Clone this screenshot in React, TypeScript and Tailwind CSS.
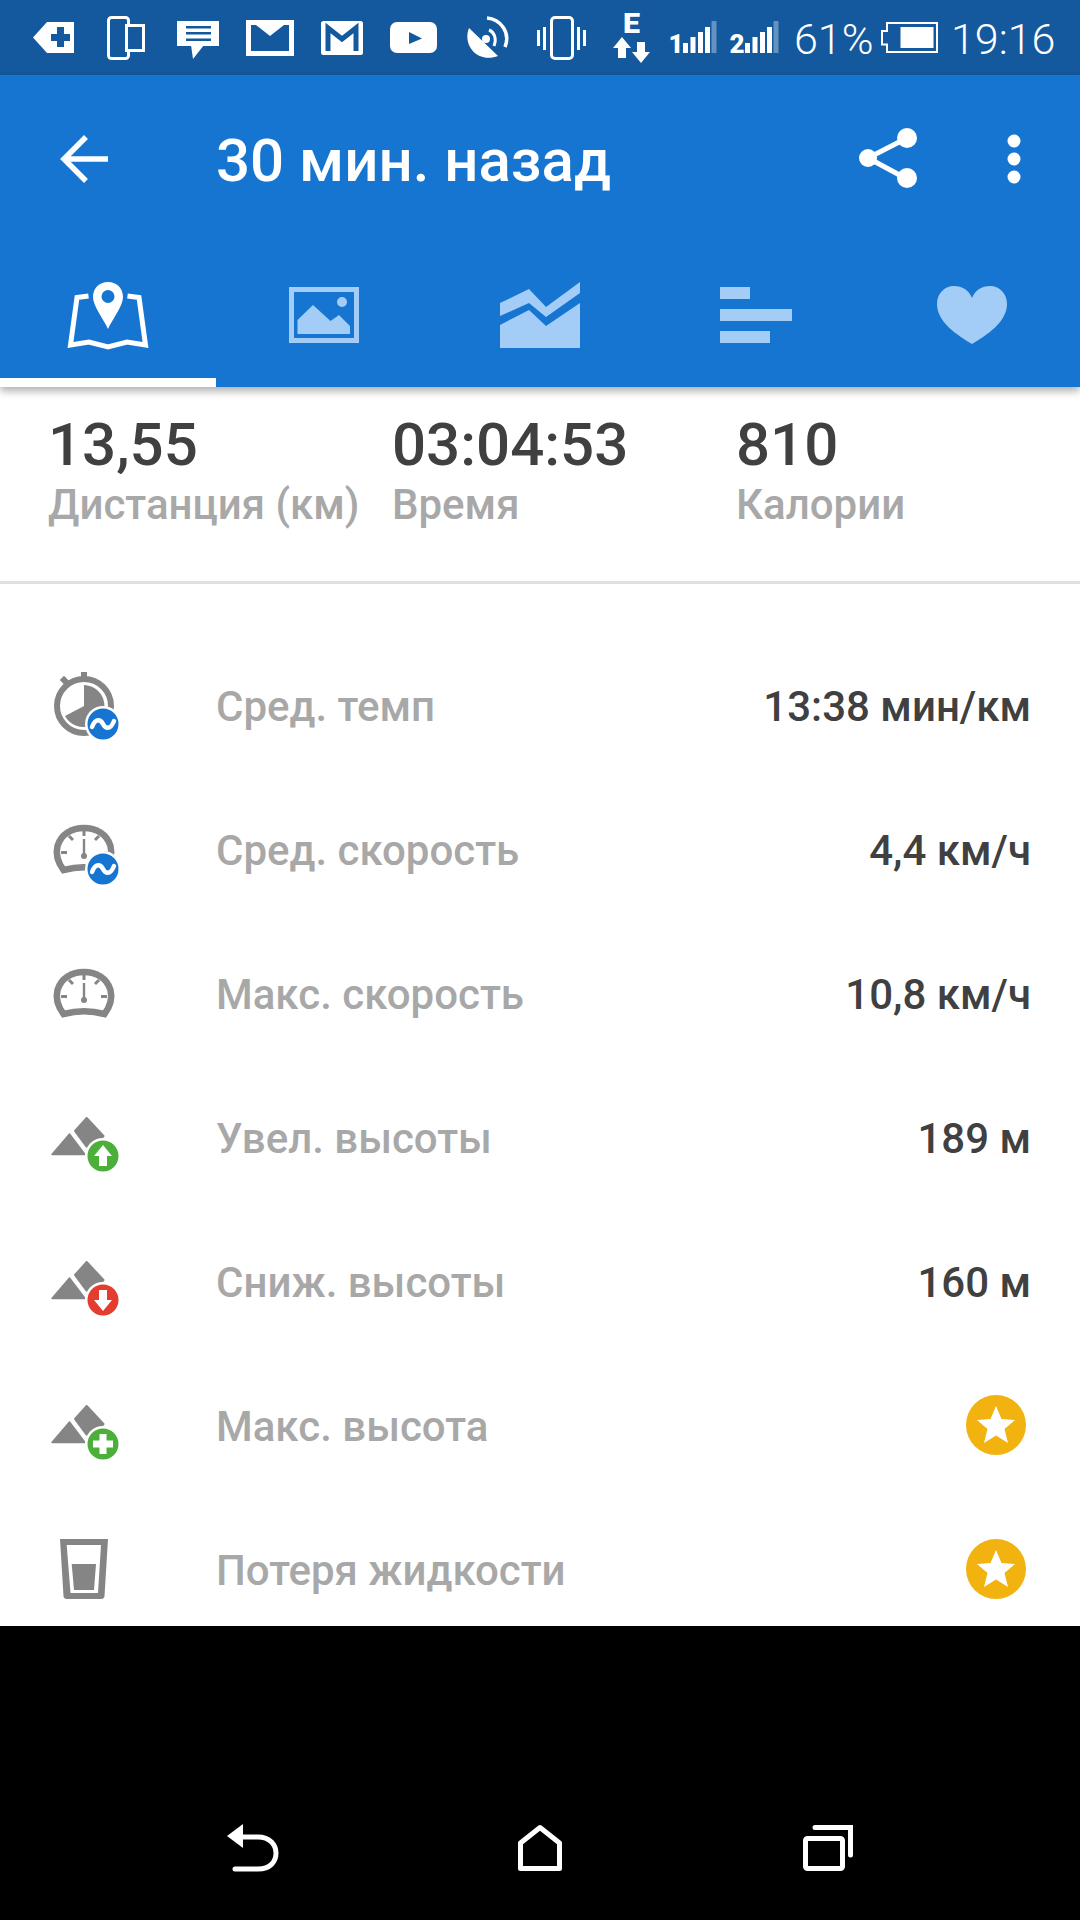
import React from "react";

const GRAY = "#858585";

function S({ x, w, ml, children }: { x: number; w: number; ml: number; children: React.ReactNode }) {
  return (
    <svg width={w} height={75} viewBox={`${x} 0 ${w} 75`} className="shrink-0 block overflow-visible" style={{ marginLeft: ml }}>
      {children}
    </svg>
  );
}

const BAR = "#14589e";

function Bars({ x0 }: { x0: number }) {
  const xs = [0, 7.5, 15, 22];
  const tops = [43, 37, 32, 27];
  return (
    <>
      {xs.map((d, i) => (
        <rect key={i} x={x0 + d} y={tops[i]} width={5} height={53 - tops[i]} fill="#fff" />
      ))}
      <rect x={x0 + 28.5} y={21} width={5} height={32} fill="#fff" opacity={0.35} />
    </>
  );
}

function StatusBar() {
  return (
    <div className="h-[75px] bg-[#14589e] flex items-center text-white font-light text-[43px] leading-none">
      <S x={33} w={41} ml={33}>
        <polygon points="33,37.5 47,22 74,22 74,53 47,53" fill="#fff" />
        <rect x={51} y={34} width={19} height={7} fill={BAR} />
        <rect x={57} y={27} width={7} height={20} fill={BAR} />
      </S>
      <S x={107} w={38} ml={33}>
        <rect x={108.5} y={17.5} width={20} height={41} rx={3} fill={BAR} stroke="#fff" strokeWidth={3} />
        <rect x={126.5} y={25.5} width={17} height={25} fill={BAR} stroke="#fff" strokeWidth={3} />
      </S>
      <S x={177} w={42} ml={32}>
        <rect x={177} y={21} width={42} height={25} fill="#fff" />
        <polygon points="191,45 204,45 193,59" fill="#fff" />
        <rect x={186} y={26} width={25} height={2.5} fill={BAR} />
        <rect x={186} y={32} width={25} height={2.5} fill={BAR} />
        <rect x={186} y={38.5} width={25} height={2.5} fill={BAR} />
      </S>
      <S x={246} w={48} ml={27}>
        <rect x={246} y={20} width={48} height={36} fill="#fff" />
        <rect x={251} y={25} width={38} height={26} fill={BAR} />
        <polygon points="256,25 284,25 270,36" fill="#fff" />
      </S>
      <S x={321} w={42} ml={27}>
        <rect x={321} y={21} width={42} height={34} rx={2.5} fill="#fff" />
        <polyline points="328,51 328,28 342,39 356,28 356,51" fill="none" stroke={BAR} strokeWidth={5} />
      </S>
      <S x={390} w={47} ml={27}>
        <rect x={390} y={22} width={47} height={31} rx={7} fill="#fff" />
        <polygon points="409,32 422,38.5 409,44" fill={BAR} />
      </S>
      <S x={468} w={42} ml={31}>
        <path d="M469 28 L498 56 C488 60 477 57 472 50 C467 44 466 35 469 28 Z" fill="#fff" />
        <circle cx={486} cy={39} r={4} fill="#fff" />
        <path d="M489 30 C494 32 497 38 494 46" fill="none" stroke="#fff" strokeWidth={3} />
        <path d="M487 18 C500 19 511 32 505 47" fill="none" stroke="#fff" strokeWidth={3.5} />
      </S>
      <S x={536} w={50} ml={26}>
        <rect x={551.5} y={17.5} width={21} height={41} rx={3.5} fill="none" stroke="#fff" strokeWidth={3} />
        <rect x={537} y={30} width={3} height={16} fill="#fff" />
        <rect x={543} y={27} width={3} height={23} fill="#fff" />
        <rect x={577} y={27} width={3} height={23} fill="#fff" />
        <rect x={583} y={30} width={3} height={16} fill="#fff" />
      </S>
      <S x={613} w={37} ml={27}>
        <text x={623} y={33} textLength={17} lengthAdjust="spacingAndGlyphs" fontFamily="Roboto, sans-serif" fontWeight={900} fontSize={28} fill="#fff">E</text>
        <polygon points="622,37 631,48 626,48 626,58 618,58 618,48 613,48" fill="#fff" />
        <polygon points="641,63 632,52 637,52 637,42 645,42 645,52 650,52" fill="#fff" />
      </S>
      <S x={671} w={46} ml={21}>
        <text x={676} y={53} textAnchor="middle" fontFamily="Roboto, sans-serif" fontWeight={900} fontSize={26} fill="#fff">1</text>
        <Bars x0={683} />
      </S>
      <S x={731} w={49} ml={14}>
        <text x={737} y={53} textAnchor="middle" fontFamily="Roboto, sans-serif" fontWeight={900} fontSize={26} fill="#fff">2</text>
        <Bars x0={745} />
      </S>
      <span className="ml-[14px] w-[77px] pt-[3px] shrink-0 font-['Roboto',sans-serif] whitespace-nowrap">61%</span>
      <S x={881} w={57} ml={10}>
        <path d="M887 23 H937 V52 H887 V44.5 H882 V31 H887 Z" fill="none" stroke="#fff" strokeWidth={2} />
        <rect x={900.5} y={27} width={33} height={21} fill="#fff" />
      </S>
      <span className="ml-[13px] pt-[3px] font-['Roboto',sans-serif]">19:16</span>
    </div>
  );
}

function TabIcon({ children }: { children: React.ReactNode }) {
  return (
    <svg width={90} height={70} viewBox="0 0 90 70" className="block">
      {children}
    </svg>
  );
}

function Tabs() {
  const c = "#a3cdf7";
  const icons = [
    <TabIcon key="m">
      <path fillRule="evenodd" d="M45 0 C36 0 30 6.500 30 15 C30 24 40 36 45 47 C50 36 60 24 60 15 C60 6.500 54 0 45 0 Z M45 8 A6.500 6.500 0 1 1 45 21 A6.500 6.500 0 0 1 45 8 Z" fill="#fff" />
      <path d="M25.500 14 L14 15.500 L7.500 63 L26 60 L45 65 L64 60 L82.500 63 L76 15.500 L64.500 14" fill="none" stroke="#fff" strokeWidth={5} />
    </TabIcon>,
    <TabIcon key="i">
      <rect x={12.500} y={7.500} width={65} height={51} fill="none" stroke={c} strokeWidth={5} />
      <circle cx={63} cy={20} r={5} fill={c} />
      <polygon points="18.500,52 18.500,38 34,23 51.500,39 60,33 71,44 71,52" fill={c} />
    </TabIcon>,
    <TabIcon key="c">
      <polygon points="5,21 34,7 51,25 85,0 85,11 51,35 34,21 5,34" fill={c} />
      <polygon points="5,43 34,28 51,44 85,21 85,66 5,66" fill={c} />
    </TabIcon>,
    <TabIcon key="b">
      <rect x={9} y={5} width={30} height={12} fill={c} />
      <rect x={9} y={27} width={72} height={12} fill={c} />
      <rect x={9} y={49} width={50} height={12} fill={c} />
    </TabIcon>,
    <TabIcon key="h">
      <path d="M45 62 C30 53 10 40 10 22 C10 11 18 4 27 4 C35 4 42 8 45 16 C48 8 55 4 63 4 C72 4 80 11 80 22 C80 40 60 53 45 62 Z" fill={c} />
    </TabIcon>,
  ];
  return (
    <div className="flex h-[105px]">
      {icons.map((ic, i) => (
        <div key={i} className="relative w-[216px] h-[105px] flex items-start justify-center">
          {ic}
          {i === 0 && <div className="absolute left-0 right-0 bottom-0 h-[9px] bg-white" />}
        </div>
      ))}
    </div>
  );
}

function AppBar() {
  return (
    <div className="relative z-10 bg-[#1675d1] h-[312px] shadow-[0_4px_8px_rgba(0,0,0,0.32)]">
      <div className="h-[207px] flex items-start">
        <svg width={48} height={50} viewBox="0 0 48 50" className="ml-[60px] mt-[59px] shrink-0">
          <path d="M48 25 H4 M26 3 L4 25 L26 47" fill="none" stroke="#fff" strokeWidth={5.500} />
        </svg>
        <div className="ml-[108px] mt-[51px] text-[60px] leading-[70px] font-medium text-white whitespace-nowrap">
          30 мин. назад
        </div>
        <svg width={60} height={62} viewBox="0 0 60 62" className="ml-auto mt-[52px] shrink-0">
          <path d="M48 11 L9 31 L48 52" fill="none" stroke="#fff" strokeWidth={5} />
          <circle cx={48} cy={11} r={10} fill="#fff" />
          <circle cx={9} cy={31} r={9} fill="#fff" />
          <circle cx={48} cy={51} r={10} fill="#fff" />
        </svg>
        <svg width={14} height={50} viewBox="0 0 14 50" className="ml-[88px] mr-[59px] mt-[59px] shrink-0">
          <circle cx={7} cy={7} r={6.500} fill="#fff" />
          <circle cx={7} cy={25} r={6.500} fill="#fff" />
          <circle cx={7} cy={43} r={6.500} fill="#fff" />
        </svg>
      </div>
      <Tabs />
    </div>
  );
}

function Stat({ v, l }: { v: string; l: string }) {
  return (
    <div className="w-[344px]">
      <div className="text-[60px] leading-[60px] font-medium text-[#404040]">{v}</div>
      <div className="text-[42px] leading-[60px] font-medium text-[#a8a8a8] whitespace-nowrap">{l}</div>
    </div>
  );
}

function Wave({ cx, cy }: { cx: number; cy: number }) {
  return (
    <>
      <circle cx={cx} cy={cy} r={18} fill="#fff" />
      <circle cx={cx} cy={cy} r={15.500} fill="#1675d1" />
      <path d={`M${cx - 11} ${cy + 3} C${cx - 7} ${cy - 7} ${cx - 2} ${cy - 4} ${cx} ${cy} C${cx + 2} ${cy + 4} ${cx + 7} ${cy + 7} ${cx + 11} ${cy - 3}`} fill="none" stroke="#fff" strokeWidth={4.500} strokeLinecap="round" />
    </>
  );
}

function Speedo() {
  return (
    <>
      <path d="M19.500 60 C12 50 12 42 13.500 36 C17 24 28 18 40 18 C52 18 63 24 66.500 36 C68 42 68 50 60.500 60 C47 56.500 33 56.500 19.500 60 Z" fill="none" stroke={GRAY} strokeWidth={6.500} />
      <rect x={38.500} y={18} width={3} height={8} fill={GRAY} />
      <rect x={17} y={41} width={6} height={3} fill={GRAY} />
      <rect x={57} y={41} width={6} height={3} fill={GRAY} />
      <path d="M25 26 L29 30 M55 26 L51 30" stroke={GRAY} strokeWidth={3} />
      <rect x={38.800} y={29} width={2.400} height={16} fill={GRAY} />
      <circle cx={40} cy={46} r={3} fill={GRAY} />
    </>
  );
}

function Mountains() {
  return (
    <>
      <polygon points="8,56.500 25.500,36 41,56.500" fill={GRAY} stroke={GRAY} strokeWidth={1.500} strokeLinejoin="round" />
      <polygon points="31,33 42.700,20 59.500,38 47,52 42,48" fill={GRAY} stroke={GRAY} strokeWidth={2} strokeLinejoin="round" />
    </>
  );
}

function Badge({ fill, children }: { fill: string; children: React.ReactNode }) {
  return (
    <>
      <circle cx={59} cy={58} r={18} fill="#fff" />
      <circle cx={59} cy={58} r={15.500} fill={fill} />
      {children}
    </>
  );
}

const rowIcons = [
  <>
    <circle cx={40} cy={40} r={27} fill="none" stroke={GRAY} strokeWidth={6} />
    <rect x={37} y={6} width={6} height={8} fill={GRAY} />
    <rect x={17} y={11} width={6} height={7} fill={GRAY} transform="rotate(-45 20 14)" />
    <path d="M40 19 A21 21 0 1 1 21 50 L40 40 Z" fill={GRAY} />
    <Wave cx={59} cy={58} />
  </>,
  <>
    <Speedo />
    <Wave cx={59} cy={59} />
  </>,
  <Speedo />,
  <>
    <Mountains />
    <Badge fill="#4caf3a">
      <polygon points="59,47 68,58 63,58 63,68 55,68 55,58 50,58" fill="#fff" />
    </Badge>
  </>,
  <>
    <Mountains />
    <Badge fill="#e53c30">
      <polygon points="59,69 68,58 63,58 63,48 55,48 55,58 50,58" fill="#fff" />
    </Badge>
  </>,
  <>
    <Mountains />
    <Badge fill="#4caf3a">
      <rect x={55.500} y={48} width={7} height={20} fill="#fff" />
      <rect x={49} y={54.500} width={20} height={7} fill="#fff" />
    </Badge>
  </>,
  <>
    <path fillRule="evenodd" d="M16 9 H64 L60.500 66 Q60.300 69 57 69 H23 Q19.700 69 19.500 66 Z M22.700 15 L26.500 63 H54 L57 15 Z" fill={GRAY} />
    <polygon points="27.700,34 52,34 50,60 30,60" fill={GRAY} />
  </>,
];

const rows: [string, string | null][] = [
  ["Сред. темп", "13:38 мин/км"],
  ["Сред. скорость", "4,4 км/ч"],
  ["Макс. скорость", "10,8 км/ч"],
  ["Увел. высоты", "189 м"],
  ["Сниж. высоты", "160 м"],
  ["Макс. высота", null],
  ["Потеря жидкости", null],
];

function StarCircle() {
  return (
    <svg width={60} height={60} viewBox="0 0 60 60" className="mr-[5px] mb-[2px] block">
      <circle cx={30} cy={30} r={30} fill="#f2b20f" />
      <polygon points="30,11 35.500,24 49,25 38.500,34 42,48 30,40.500 18,48 21.500,34 11,25 24.500,24" fill="#fff" />
    </svg>
  );
}

function Row({ i }: { i: number }) {
  const [l, v] = rows[i];
  return (
    <div className="h-[144px] flex items-center shrink-0">
      <svg width={80} height={80} viewBox="0 0 80 80" className="ml-[44px] shrink-0">
        {rowIcons[i]}
      </svg>
      <div className="ml-[92px] text-[42px] font-medium text-[#a8a8a8] whitespace-nowrap">{l}</div>
      <div className="ml-auto mr-[49px] text-[42px] font-medium text-[#404040] whitespace-nowrap">
        {v ?? <StarCircle />}
      </div>
    </div>
  );
}

export default function App() {
  return (
    <div className="w-[1080px] h-[1920px] flex flex-col bg-black overflow-hidden font-['Roboto',sans-serif]">
      <StatusBar />
      <AppBar />
      <div className="h-[1239px] bg-white overflow-hidden">
        <div className="flex pl-[48px] pt-[28px] h-[197px] border-b-[3px] border-[#e0e0e0]">
          <Stat v="13,55" l="Дистанция (км)" />
          <Stat v="03:04:53" l="Время" />
          <Stat v="810" l="Калории" />
        </div>
        <div className="pt-[50px] flex flex-col">
          {rows.map((_, i) => (
            <Row key={i} i={i} />
          ))}
        </div>
      </div>
      <div className="flex-1">
        <svg width={1080} height={294} viewBox="0 1626 1080 294" className="block">
          <path d="M241 1837 H258 C270 1837 276 1845 276 1853 C276 1862 270 1869 258 1869 H235" fill="none" stroke="#fff" strokeWidth={5} strokeLinecap="round" />
          <polygon points="227,1836 243,1824 243,1848" fill="#fff" />
          <path d="M520.500 1868.500 V1843 L540 1827.500 L559.500 1843 V1868.500 Z" fill="none" stroke="#fff" strokeWidth={5} strokeLinejoin="round" />
          <rect x={805.500} y={1838.500} width={37} height={30} rx={2} fill="none" stroke="#fff" strokeWidth={5} />
          <path d="M815 1827.500 H850.500 V1855" fill="none" stroke="#fff" strokeWidth={5} strokeLinecap="round" />
        </svg>
      </div>
    </div>
  );
}
